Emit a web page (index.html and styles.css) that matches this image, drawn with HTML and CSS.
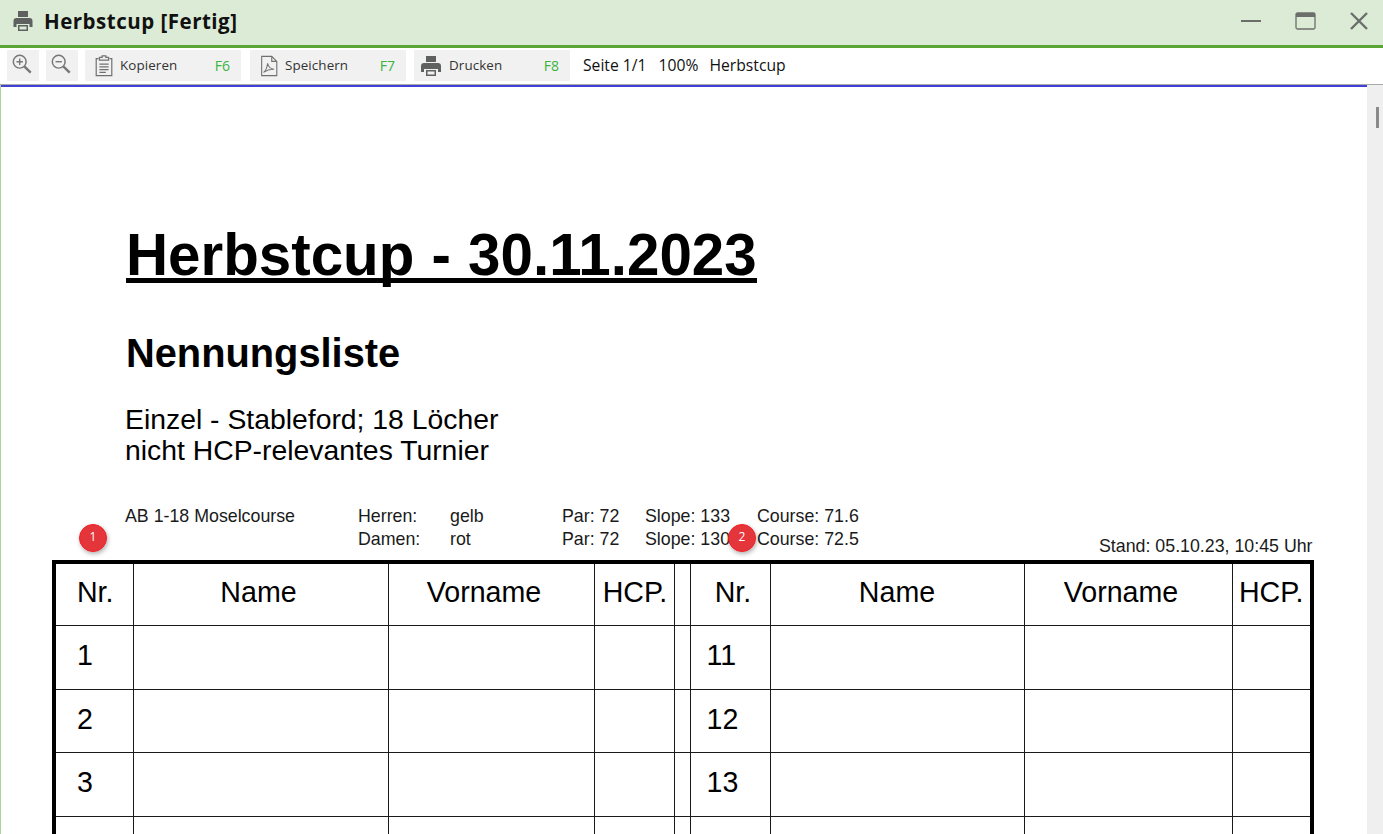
FILE: index.html
```html
<!DOCTYPE html>
<html lang="de">
<head>
<meta charset="utf-8">
<title>Herbstcup [Fertig]</title>
<link rel="stylesheet" href="styles.css">
</head>
<body>
<div class="window">
  <header class="titlebar">
    <svg class="title-icon" viewBox="0 0 22 22"><path fill="#5f6160" d="M6 1h10v6H6zM4.500 8h13A3 3 0 0 1 20.500 11v6h-3v-3h-13v3h-3v-6a3 3 0 0 1 3-3zM6 15h10v6H6z"/><path fill="#dcebd5" d="M7.500 16.500h7v3h-7z"/></svg>
    <span class="title-text">Herbstcup [Fertig]</span>
    <div class="win-controls">
      <svg class="win-btn" viewBox="0 0 22 22"><path d="M1 11h20" stroke="#6b6e6b" stroke-width="2" fill="none"/></svg>
      <svg class="win-btn" viewBox="0 0 22 22"><rect x="2" y="3" width="19" height="16" rx="1.500" fill="none" stroke="#6b6e6b" stroke-width="1.300"/><path d="M2 3h19v4H2z" fill="#6b6e6b"/></svg>
      <svg class="win-btn" viewBox="0 0 22 22"><path d="M3 3l16 16M19 3L3 19" stroke="#6b6e6b" stroke-width="2.400" fill="none"/></svg>
    </div>
  </header>
  <nav class="toolbar">
    <button class="tool square"><svg viewBox="0 0 24 24"><circle cx="9.500" cy="9.500" r="7" fill="none" stroke="#777" stroke-width="1.600"/><path d="M14.500 14.500l7 7" stroke="#777" stroke-width="2.600"/><path d="M6 9.500h7M9.500 6v7" stroke="#777" stroke-width="1.500"/></svg></button>
    <button class="tool square"><svg viewBox="0 0 24 24"><circle cx="9.500" cy="9.500" r="7" fill="none" stroke="#777" stroke-width="1.600"/><path d="M14.500 14.500l7 7" stroke="#777" stroke-width="2.600"/><path d="M6 9.500h7" stroke="#777" stroke-width="1.500"/></svg></button>
    <button class="tool wide">
      <svg viewBox="0 0 24 24"><path d="M6 4H3.500v18.500h17V4H18" fill="none" stroke="#707070" stroke-width="1.300"/><path d="M7 5.500h10V2.500h-3V1h-4v1.500H7z" fill="none" stroke="#707070" stroke-width="1.300"/><path d="M7 10h10M7 13h10M7 16h10M7 19h7" stroke="#707070" stroke-width="1.200"/></svg>
      <span class="tool-label">Kopieren</span><span class="tool-key">F6</span>
    </button>
    <button class="tool wide">
      <svg viewBox="0 0 24 24"><path d="M4 1.500h11l5.500 5.500v15.500H4zM15 1.500V7h5.500" fill="none" stroke="#707070" stroke-width="1.200"/><path d="M6 19c3-2 4-6 4.500-10 .8 4 2.500 6 7 6.500-4-.2-8 1-11.500 3.500z" fill="none" stroke="#707070" stroke-width="1.100"/></svg>
      <span class="tool-label">Speichern</span><span class="tool-key">F7</span>
    </button>
    <button class="tool wide print">
      <svg viewBox="0 0 22 22"><path fill="#5f6160" d="M6 1h10v6H6zM4 8h14a3 3 0 0 1 3 3v6h-3v-3H4v3H1v-6a3 3 0 0 1 3-3zM6 15h10v6H6z"/><path fill="#f1f1f1" d="M7.500 16.500h7v3h-7z"/></svg>
      <span class="tool-label">Drucken</span><span class="tool-key">F8</span>
    </button>
    <span class="status">Seite 1/1</span>
    <span class="status">100%</span>
    <span class="status">Herbstcup</span>
  </nav>
  <div class="viewer">
    <main class="page">
      <h1>Herbstcup - 30.11.2023</h1>
      <h2>Nennungsliste</h2>
      <p class="sub">Einzel - Stableford; 18 Löcher<br>nicht HCP-relevantes Turnier</p>
      <div class="meta">
        <div class="course">AB 1-18 Moselcourse</div>
        <div class="m-label">Herren:<br>Damen:</div>
        <div class="m-color">gelb<br>rot</div>
        <div class="m-par">Par: 72<br>Par: 72</div>
        <div class="m-slope">Slope: 133<br>Slope: 130</div>
        <div class="m-course">Course: 71.6<br>Course: 72.5</div>
        <div class="stand">Stand: 05.10.23, 10:45 Uhr</div>
      </div>
      <div class="sheet">
        <table>
          <colgroup>
            <col class="c-nr"><col class="c-name"><col class="c-vor"><col class="c-hcp"><col class="c-gap"><col class="c-nr2"><col class="c-name2"><col class="c-vor2"><col class="c-hcp2">
          </colgroup>
          <tr><th class="th-nr">Nr.</th><th class="th-name">Name</th><th class="th-vor">Vorname</th><th class="th-hcp">HCP.</th><th></th><th class="th-nr2">Nr.</th><th>Name</th><th class="th-vor">Vorname</th><th>HCP.</th></tr>
          <tr><td class="num1">1</td><td></td><td></td><td></td><td></td><td class="num2">11</td><td></td><td></td><td></td></tr>
          <tr><td class="num1">2</td><td></td><td></td><td></td><td></td><td class="num2">12</td><td></td><td></td><td></td></tr>
          <tr><td class="num1">3</td><td></td><td></td><td></td><td></td><td class="num2">13</td><td></td><td></td><td></td></tr>
          <tr><td></td><td></td><td></td><td></td><td></td><td></td><td></td><td></td><td></td></tr>
        </table>
      </div>
    </main>
    <aside class="scrollbar"><span class="thumb"></span></aside>
    <span class="badge badge-one">1</span>
    <span class="badge badge-two">2</span>
  </div>
</div>
</body>
</html>
```
FILE: styles.css
```css
* { box-sizing: border-box; }
html, body { margin: 0; height: 100%; overflow: hidden; background: #fff; }
.window { width: 1383px; height: 834px; display: flex; flex-direction: column; overflow: hidden; font-family: "Open Sans", sans-serif; }
.titlebar { height: 48px; flex: none; background: #dcebd5; border-bottom: 3px solid #5ba534; display: flex; align-items: center; padding: 0 13px 4px 12px; }
.title-icon { width: 22px; height: 22px; margin-right: 10px; }
.title-text { font-size: 20.500px; font-weight: 700; color: #111; letter-spacing: .5px; }
.win-controls { margin-left: auto; display: flex; gap: 32px; }
.win-btn { width: 22px; height: 22px; display: block; }
.toolbar { height: 37px; flex: none; display: flex; align-items: flex-start; padding: 2px 0 0 7px; background: #fff; border-bottom: 1px solid #aaa; }
.tool { height: 31px; border: 0; padding: 0; background: #f1f1f1; display: flex; align-items: center; font: inherit; color: #333; }
.tool svg { display: block; }
.square { width: 32px; margin-right: 7px; justify-content: center; padding: 0 2px 4px 0; }
.square svg { width: 22px; height: 22px; }
.wide { width: 156px; margin-right: 9px; padding: 0 11px 0 8px; }
.wide svg { width: 22px; height: 22px; margin-right: 5px; flex: none; }
.wide.print { margin-left: -1px; padding-left: 6px; }
.wide.print svg { margin-right: 7px; }
.tool-label { font-size: 13.400px; margin-top: -2px; letter-spacing: .1px; }
.tool-key { margin-left: auto; font-size: 14px; color: #38b53b; }
.status { font-size: 15.700px; line-height: 31px; color: #111; margin-right: 12px; }
.status:last-child { margin-left: -1px; }
.toolbar .print { margin-right: 13px; }
.viewer { position: relative; flex: 1; min-height: 0; display: flex; border-left: 1px solid #a9d79a; overflow: hidden; }
.page { flex: 1; border-top: 2px solid #4141d8; padding: 135px 0 0 51px; font-family: "Liberation Sans", Arial, sans-serif; color: #000; }
h1 { margin: 0 0 0 74px; width: max-content; font-size: 58.300px; word-spacing: 1px; line-height: 66px; font-weight: 700; border-bottom: 5px solid #000; height: 61px; }
h2 { margin: 48px 0 0 74px; font-size: 39.800px; line-height: 44px; font-weight: 700; }
.sub { margin: 29px 0 0 73px; font-size: 28.350px; line-height: 31px; }
.meta { position: relative; height: 55px; margin-top: 39px; font-size: 17.800px; line-height: 23px; color: #1a1a1a; }
.meta > div { position: absolute; top: 0; white-space: nowrap; }
.course { left: 73px; }
.m-label { left: 306px; }
.m-color { left: 398px; }
.m-par { left: 510px; }
.m-slope { left: 593px; }
.m-course { left: 705px; }
.meta > .stand { top: 30px; left: 1047px; }
.sheet { width: 1262px; height: 400px; }
table { border-collapse: collapse; table-layout: fixed; width: 1262px; border: 4px solid #000; border-bottom: 0; }
th, td { border: 1.500px solid #1a1a1a; padding: 0 0 4px; height: 63.650px; text-align: center; font-weight: 400; font-size: 28.600px; }
.c-nr { width: 79px; } .c-name { width: 255px; } .c-vor { width: 206px; } .c-hcp { width: 80px; } .c-gap { width: 16px; }
.c-nr2 { width: 80px; } .c-name2 { width: 254px; } .c-vor2 { width: 208px; } .c-hcp2 { width: 80px; }
th.th-nr { padding-left: 2px; }
th.th-name { padding-right: 4px; }
th.th-vor { padding-right: 14px; }
th.th-hcp { padding-left: 2px; }
th.th-nr2 { padding-left: 6px; }
td.num1 { text-align: left; padding-left: 21px; }
td.num2 { text-align: left; padding-left: 16px; }
.scrollbar { width: 16px; flex: none; background: #efefef; position: relative; }
.thumb { position: absolute; left: 9px; top: 22px; width: 3px; height: 21px; background: #8a8a8a; }
.badge { position: absolute; width: 28px; height: 28px; border-radius: 50%; background: #e4353b; border: 1px solid #f51e24; color: #fff; font-size: 12px; display: flex; align-items: center; justify-content: center; box-shadow: 1px 2px 4px rgba(0,0,0,.3); font-family: "Open Sans", sans-serif; padding-bottom: 3px; }
.badge-one { left: 78px; top: 439px; }
.badge-two { left: 727px; top: 439px; }
```
